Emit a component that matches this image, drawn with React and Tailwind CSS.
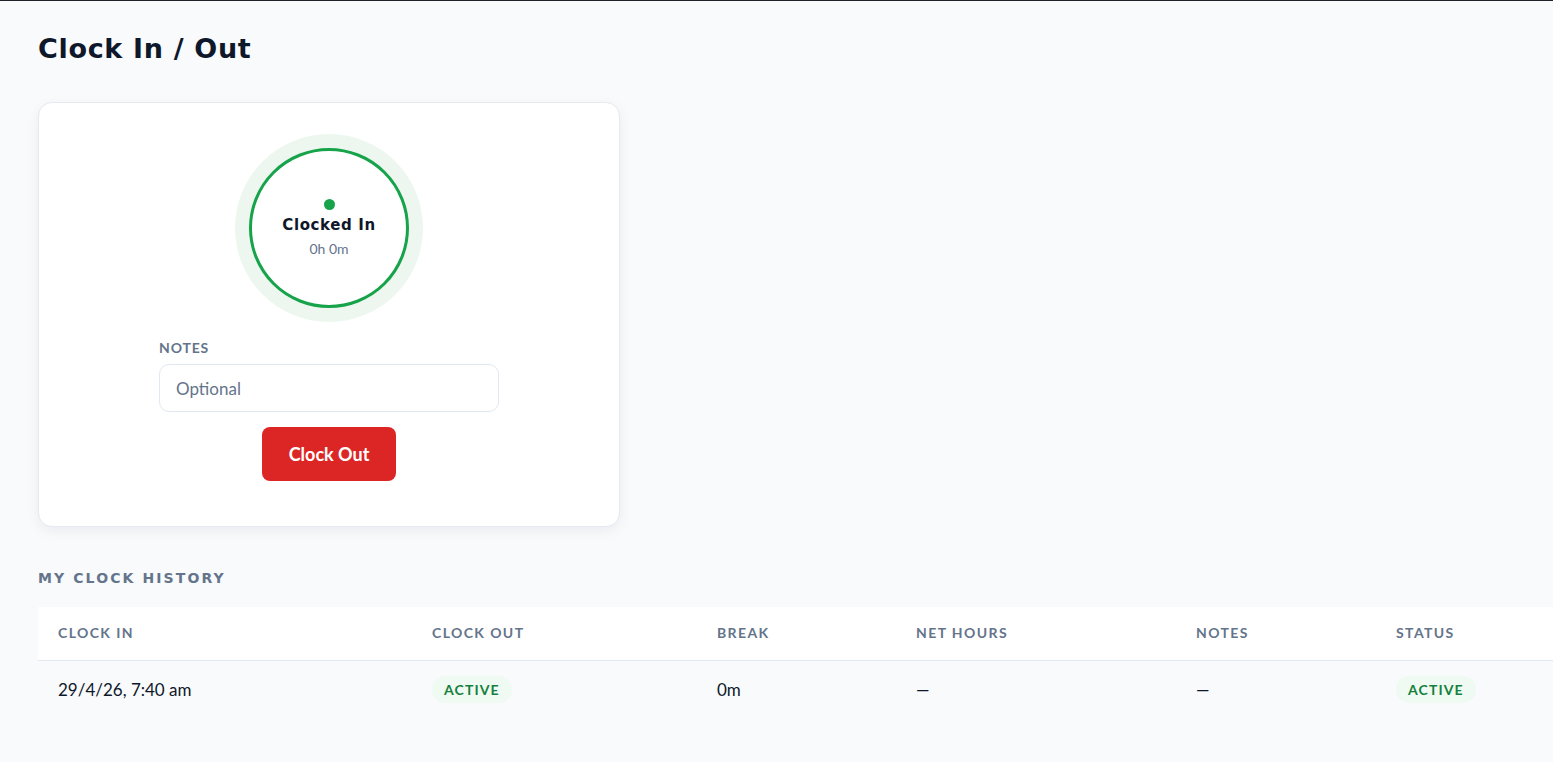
import React from "react";

const wide = { fontFamily: '"DejaVu Sans", sans-serif' };

function Badge() {
  return (
    <span className="inline-flex items-center rounded-full bg-[#effbf2] px-[12px] py-[3px] text-[14px] font-bold tracking-[0.08em] text-[#15803d]">
      ACTIVE
    </span>
  );
}

export default function App() {
  const cols = [
    { label: "CLOCK IN", w: "w-[374px]" },
    { label: "CLOCK OUT", w: "w-[285px]" },
    { label: "BREAK", w: "w-[199px]" },
    { label: "NET HOURS", w: "w-[280px]" },
    { label: "NOTES", w: "w-[200px]" },
    { label: "STATUS", w: "w-[200px]" },
  ];
  return (
    <div
      className="min-h-[762px] w-[1553px] overflow-hidden border-t border-[#1f2329] bg-[#f8fafc] text-[#0f172a]"
      style={{ fontFamily: 'Lato, "Noto Sans", sans-serif' }}
    >
      <div className="pl-[38px] pt-[31px]">
        <h1 className="text-[27px] font-bold leading-[34px] tracking-[0.025em] text-[#0f172a]" style={wide}>
          Clock In / Out
        </h1>

        <div className="mt-[36px] flex w-[582px] flex-col items-center rounded-[14px] border border-[#e5e9f0] bg-white pb-[45px] pt-[31px] shadow-[0_4px_14px_rgba(15,23,42,0.06)]">
          <div className="flex h-[188px] w-[188px] items-center justify-center rounded-full bg-[#edf7ef]">
            <div className="flex h-[160px] w-[160px] flex-col items-center justify-center rounded-full border-[3px] border-[#16a34a] bg-white">
              <div className="h-[11px] w-[11px] rounded-full bg-[#16a34a]" />
              <div className="mt-[6px] text-[15px] font-bold leading-[18px] tracking-[0.04em] text-[#0f172a]" style={wide}>
                Clocked In
              </div>
              <div className="mt-[7px] text-[14px] leading-[16px] text-[#64748b]">0h 0m</div>
            </div>
          </div>

          <div className="mt-[17px] flex w-[340px] flex-col">
            <label className="text-[14px] font-bold leading-[18px] tracking-[0.06em] text-[#64748b]">NOTES</label>
            <input
              placeholder="Optional"
              className="mt-[7px] h-[48px] w-[340px] rounded-[10px] border border-[#e2e8f0] bg-white px-[16px] text-[17px] text-[#0f172a] placeholder:text-[#64748b] outline-none"
            />
          </div>
          <button className="mt-[15px] h-[54px] w-[134px] rounded-[8px] bg-[#dc2626] text-[18px] font-bold text-white">
            Clock Out
          </button>
        </div>

        <div className="mt-[43px] text-[14px] font-bold leading-[16px] tracking-[0.15em] text-[#64748b]" style={wide}>
          MY CLOCK HISTORY
        </div>

        <div className="mt-[21px] w-[1800px]">
          <div className="flex h-[54px] items-center border-b border-[#e2e8f0] bg-white">
            {cols.map((c) => (
              <div key={c.label} className={`${c.w} shrink-0 px-[20px] pb-[2px] text-[14px] font-bold tracking-[0.1em] text-[#64748b]`}>
                {c.label}
              </div>
            ))}
          </div>
          <div className="flex h-[57px] items-center text-[17px] text-[#0f172a]">
            <div className="w-[374px] shrink-0 px-[20px]">29/4/26, 7:40 am</div>
            <div className="w-[285px] shrink-0 px-[20px]"><Badge /></div>
            <div className="w-[199px] shrink-0 px-[20px]">0m</div>
            <div className="w-[280px] shrink-0 px-[20px]">—</div>
            <div className="w-[200px] shrink-0 px-[20px]">—</div>
            <div className="w-[200px] shrink-0 px-[20px]"><Badge /></div>
          </div>
        </div>
      </div>
    </div>
  );
}
